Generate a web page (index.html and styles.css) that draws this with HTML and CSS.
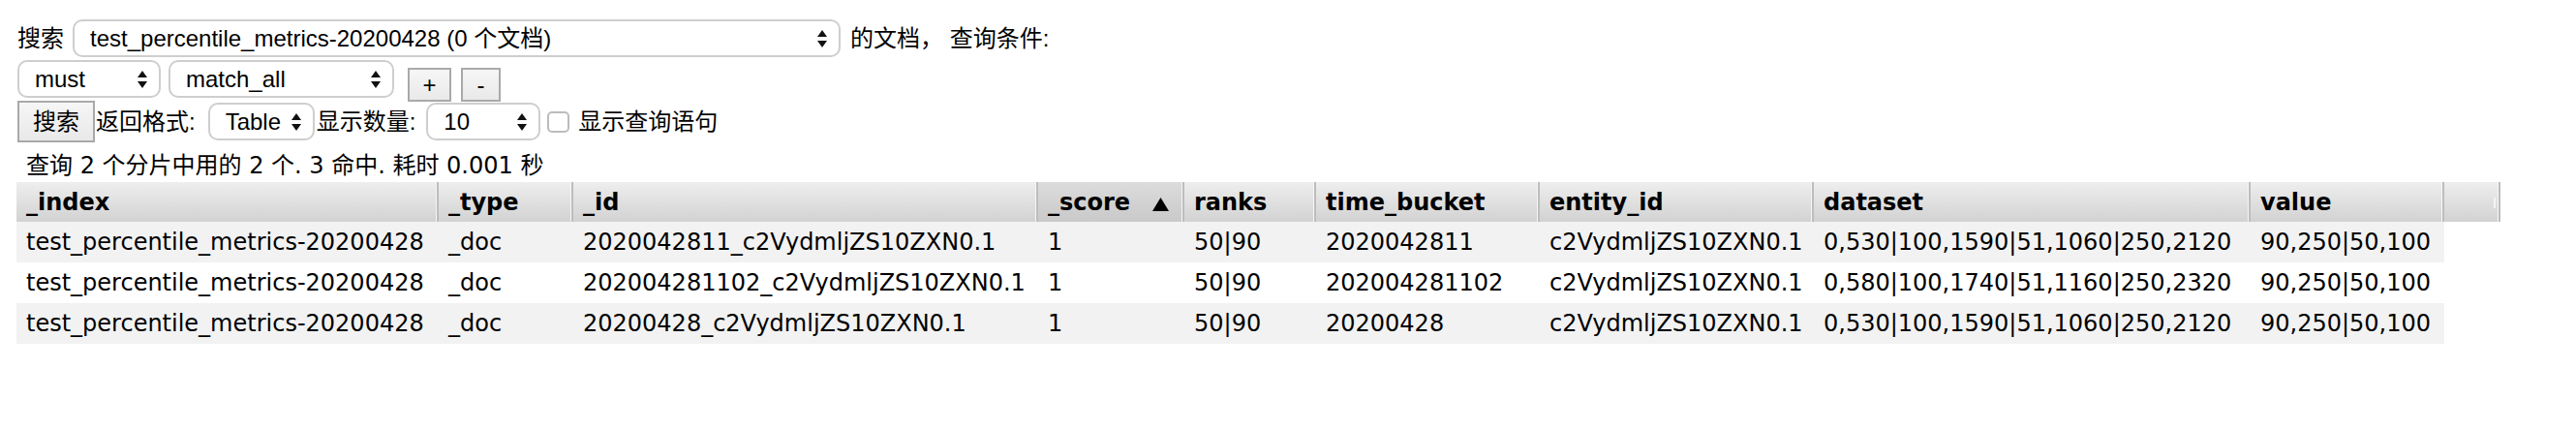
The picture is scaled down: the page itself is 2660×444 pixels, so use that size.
FILE: index.html
```html
<!DOCTYPE html>
<html lang="zh-CN">
<head>
<meta charset="utf-8">
<title>基本查询</title>
<link rel="stylesheet" href="styles.css">
</head>
<body>
<div class="page">
  <div class="form">
    <div class="row row-1">
      <span class="lbl">搜索</span>
      <div class="sel sel-index"><span class="sel-text">test_percentile_metrics-20200428 (0 个文档)</span><svg class="arrows" width="10" height="18" viewBox="0 0 10 18"><polygon points="5,0 10,7 0,7"/><polygon points="0,11 10,11 5,18"/></svg></div>
      <span class="lbl lbl-docs">的文档， 查询条件:</span>
    </div>
    <div class="row row-2">
      <div class="sel sel-must"><span class="sel-text">must</span><svg class="arrows" width="10" height="18" viewBox="0 0 10 18"><polygon points="5,0 10,7 0,7"/><polygon points="0,11 10,11 5,18"/></svg></div>
      <div class="sel sel-match"><span class="sel-text">match_all</span><svg class="arrows" width="10" height="18" viewBox="0 0 10 18"><polygon points="5,0 10,7 0,7"/><polygon points="0,11 10,11 5,18"/></svg></div>
      <button class="btn btn-plus" type="button">+</button>
      <button class="btn btn-minus" type="button">-</button>
    </div>
    <div class="row row-3">
      <button class="btn btn-search" type="button">搜索</button>
      <span class="lbl lbl-format">返回格式:</span>
      <div class="sel sel-format"><span class="sel-text">Table</span><svg class="arrows" width="10" height="18" viewBox="0 0 10 18"><polygon points="5,0 10,7 0,7"/><polygon points="0,11 10,11 5,18"/></svg></div>
      <span class="lbl lbl-size">显示数量:</span>
      <div class="sel sel-size"><span class="sel-text">10</span><svg class="arrows" width="10" height="18" viewBox="0 0 10 18"><polygon points="5,0 10,7 0,7"/><polygon points="0,11 10,11 5,18"/></svg></div>
      <input class="chk" type="checkbox">
      <span class="lbl lbl-query">显示查询语句</span>
    </div>
  </div>
  <div class="info">查询 2 个分片中用的 2 个. 3 命中. 耗时 0.001 秒</div>
  <table class="results">
    <colgroup>
      <col class="c-index"><col class="c-type"><col class="c-id"><col class="c-score"><col class="c-ranks"><col class="c-bucket"><col class="c-entity"><col class="c-dataset"><col class="c-value"><col class="c-filler">
    </colgroup>
    <thead>
      <tr>
        <th>_index</th>
        <th>_type</th>
        <th>_id</th>
        <th class="sorted">_score<svg class="sort-arrow" width="17" height="14" viewBox="0 0 17 14"><polygon points="8.5,0 17,14 0,14"/></svg></th>
        <th>ranks</th>
        <th>time_bucket</th>
        <th>entity_id</th>
        <th>dataset</th>
        <th>value</th>
        <th class="filler"><span class="grip"></span></th>
      </tr>
    </thead>
    <tbody>
      <tr>
        <td>test_percentile_metrics-20200428</td>
        <td>_doc</td>
        <td>2020042811_c2VydmljZS10ZXN0.1</td>
        <td>1</td>
        <td>50|90</td>
        <td>2020042811</td>
        <td>c2VydmljZS10ZXN0.1</td>
        <td>0,530|100,1590|51,1060|250,2120</td>
        <td>90,250|50,100</td>
        <td class="gap"></td>
      </tr>
      <tr>
        <td>test_percentile_metrics-20200428</td>
        <td>_doc</td>
        <td>202004281102_c2VydmljZS10ZXN0.1</td>
        <td>1</td>
        <td>50|90</td>
        <td>202004281102</td>
        <td>c2VydmljZS10ZXN0.1</td>
        <td>0,580|100,1740|51,1160|250,2320</td>
        <td>90,250|50,100</td>
        <td class="gap"></td>
      </tr>
      <tr>
        <td>test_percentile_metrics-20200428</td>
        <td>_doc</td>
        <td>20200428_c2VydmljZS10ZXN0.1</td>
        <td>1</td>
        <td>50|90</td>
        <td>20200428</td>
        <td>c2VydmljZS10ZXN0.1</td>
        <td>0,530|100,1590|51,1060|250,2120</td>
        <td>90,250|50,100</td>
        <td class="gap"></td>
      </tr>
    </tbody>
  </table>
</div>
</body>
</html>
```
FILE: styles.css
```css
html, body {
  margin: 0;
  padding: 0;
  background: #fff;
}

body {
  width: 2660px;
  height: 444px;
  overflow: hidden;
  color: #000;
}

.page {
  padding: 20px 0 0 17px;
}

/* ---------- query form ---------- */
.form {
  margin-left: 1px;
  font-family: "Liberation Sans", "Noto Sans CJK SC", sans-serif;
  font-size: 24px;
  line-height: 28px;
}

.row {
  display: flex;
  align-items: center;
  white-space: nowrap;
}

.row-1 { height: 39px; }
.row-2 { height: 42px; margin-top: 3px; align-items: flex-start; }
.row-3 { height: 43px; }

.sel {
  box-sizing: border-box;
  height: 39px;
  display: flex;
  align-items: center;
  padding: 0 12px 0 16px;
  border: 2px solid #cecece;
  border-radius: 10px;
  background: #fff;
}

.sel-text {
  flex: 1;
  overflow: hidden;
  white-space: nowrap;
}

.arrows {
  flex: none;
  fill: #111;
}

.sel-index { width: 793px; margin-left: 9px; }
.lbl-docs { margin-left: 10px; }

.sel-must { width: 148px; }
.sel-match { width: 233px; margin-left: 8px; }

.btn {
  box-sizing: border-box;
  display: flex;
  align-items: center;
  justify-content: center;
  padding: 0;
  border: 2px solid #a9a9a9;
  border-radius: 0;
  background: linear-gradient(#f6f6f6, #e9e9e9);
  color: #000;
  font: inherit;
  line-height: 28px;
}

.btn-plus { width: 45px; height: 35px; margin: 8px 0 0 14px; }
.btn-minus { width: 41px; height: 35px; margin: 8px 0 0 10px; }
.btn-search { width: 80px; height: 43px; }

.lbl-format { margin-left: 1px; }
.sel-format { width: 110px; margin-left: 13px; }
.lbl-size { margin-left: 2px; }
.sel-size { width: 118px; margin-left: 11px; }

.chk {
  appearance: none;
  -webkit-appearance: none;
  box-sizing: border-box;
  width: 23px;
  height: 22px;
  margin: 0 0 0 7px;
  border: 2px solid #bcbcbc;
  border-radius: 5px;
  background: #fff;
}

.lbl-query { margin-left: 9px; }

/* ---------- result info ---------- */
.info {
  margin-top: 10px;
  padding-left: 10px;
  font-family: "DejaVu Sans", "Noto Sans CJK SC", sans-serif;
  font-size: 24px;
  line-height: 28px;
  color: #000;
}

/* ---------- results table ---------- */
.results {
  margin-top: 3px;
  width: 2565px;
  table-layout: fixed;
  border-collapse: separate;
  border-spacing: 0;
  font-family: "DejaVu Sans", "Noto Sans CJK SC", sans-serif;
  font-size: 24px;
  line-height: 28px;
  color: #000;
}

.c-index { width: 436px; }
.c-type { width: 139px; }
.c-id { width: 480px; }
.c-score { width: 151px; }
.c-ranks { width: 136px; }
.c-bucket { width: 231px; }
.c-entity { width: 283px; }
.c-dataset { width: 451px; }
.c-value { width: 200px; }
.c-filler { width: 58px; }

.results th {
  box-sizing: border-box;
  height: 41px;
  padding: 0 0 0 10px;
  text-align: left;
  font-weight: bold;
  white-space: nowrap;
  overflow: hidden;
  background: linear-gradient(#eeeeee, #d2d2d2);
  border-right: 2px solid #bdbdbd;
  box-shadow: inset -1px 0 0 #f6f6f6;
}

.results th.sorted {
  background: linear-gradient(#dcdcdc, #c9c9c9);
}

.sort-arrow {
  margin-left: 23px;
  vertical-align: -1px;
  fill: #000;
}

.results th.filler {
  padding: 0 3px 0 0;
  text-align: right;
}

.grip {
  display: inline-block;
  width: 2px;
  height: 11px;
  vertical-align: middle;
  background: #f4f4f4;
}

.results td {
  height: 42px;
  padding: 0 0 0 10px;
  white-space: nowrap;
  overflow: hidden;
}

.results tbody .row-odd td,
.results tbody tr:nth-child(odd) td {
  background: #f2f2f2;
}

.results tbody tr td.gap {
  background: none;
}
```
